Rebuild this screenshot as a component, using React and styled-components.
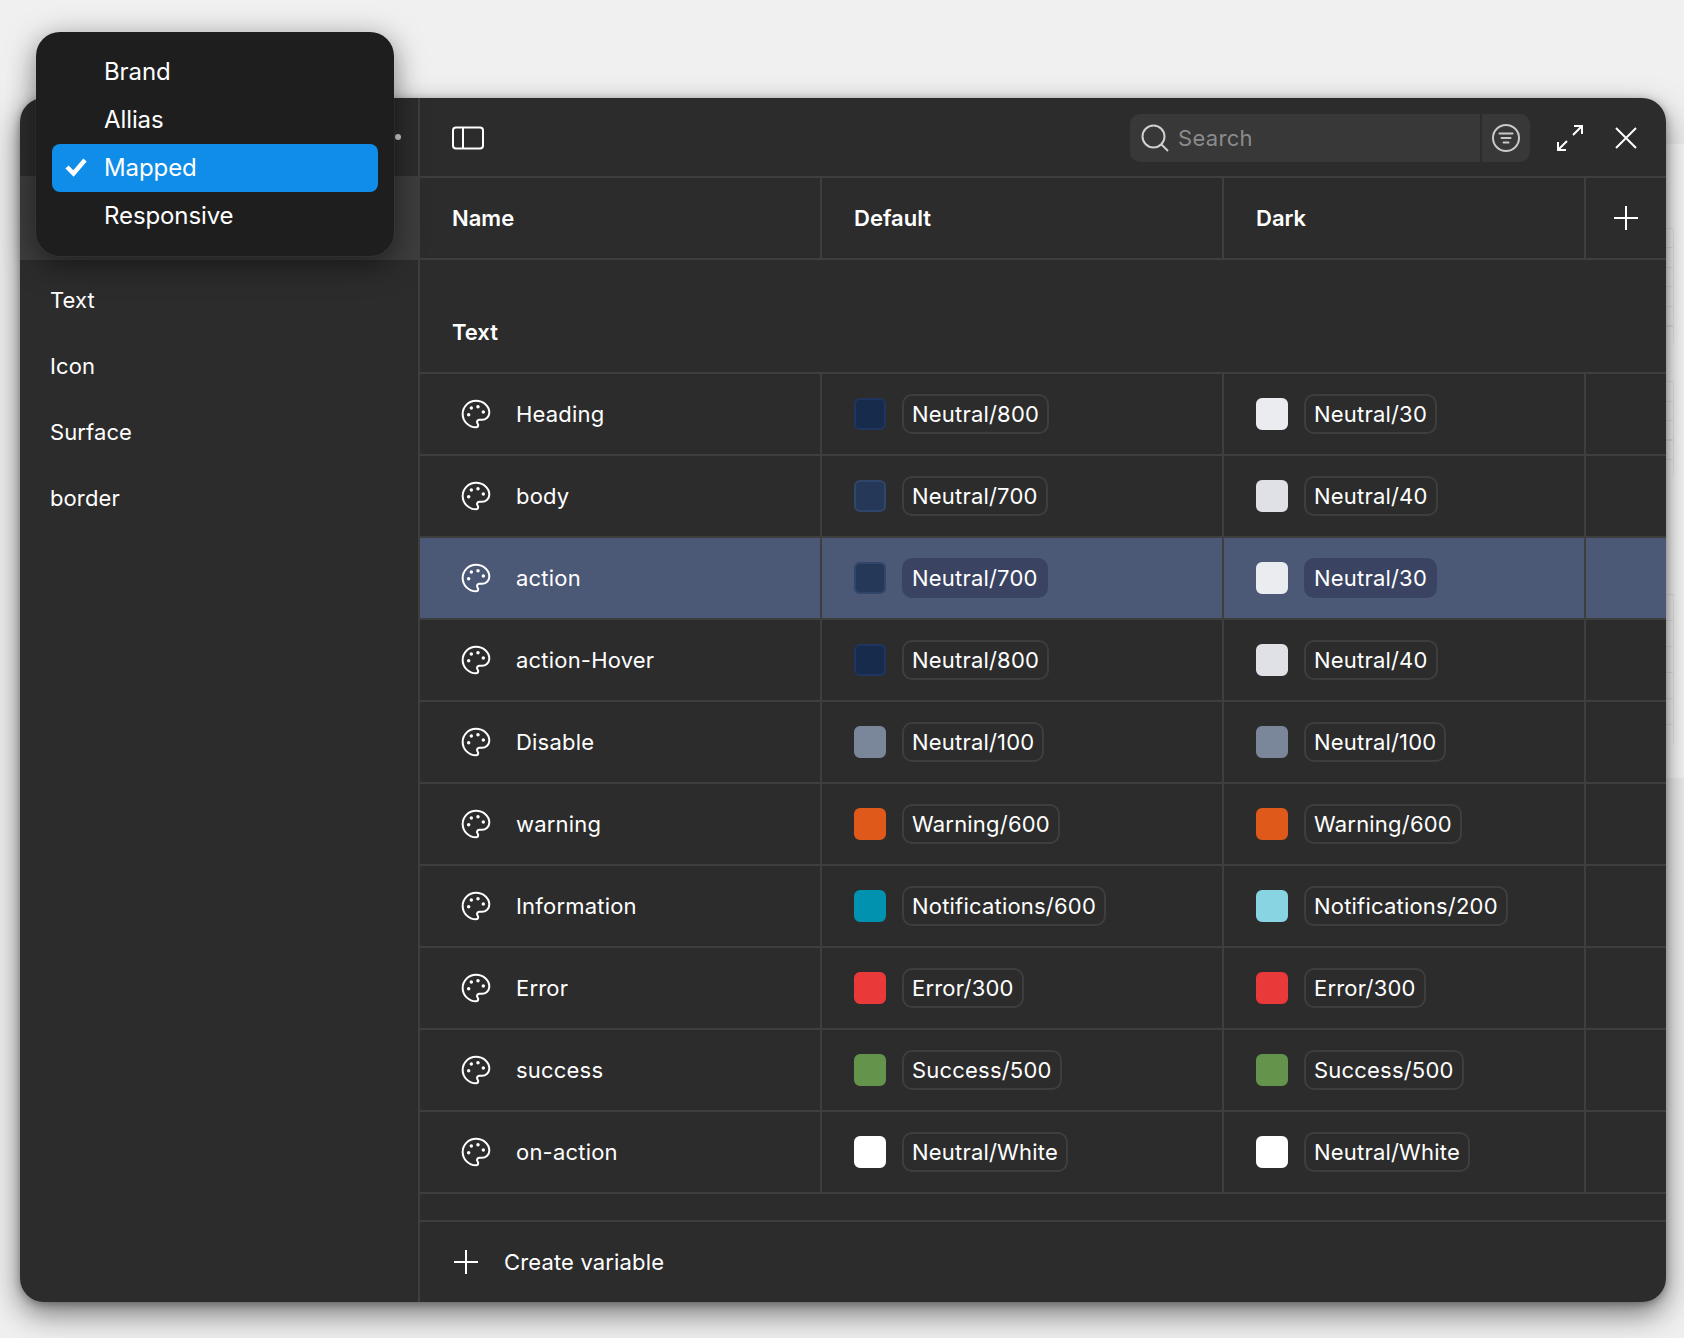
import React from 'react';
import styled, { createGlobalStyle, css } from 'styled-components';

const Global = createGlobalStyle`
  html, body { margin: 0; padding: 0; background: #f0f0f0; }
  body { font-family: Inter, "Liberation Sans", sans-serif; -webkit-font-smoothing: antialiased; }
`;

const Page = styled.div`
  position: relative;
  width: 1684px;
  height: 1338px;
  overflow: hidden;
  padding: 98px 18px 36px 20px;
  box-sizing: border-box;
  background: #f0f0f0;
`;

const Backdrop = styled.div`
  position: absolute;
  right: 0;
  top: 144px;
  width: 40px;
  height: 634px;
  background: #fafafa;
  display: flex;
  flex-direction: column;
  align-items: flex-start;
`;

const PeekGroup = styled.div`
  width: 30px;
  height: ${(p) => p.$h}px;
  margin-top: ${(p) => p.$mt}px;
  box-sizing: border-box;
  border-right: 1px solid #ececec;
  background: repeating-linear-gradient(to bottom, #e9e9e9 0, #e9e9e9 1px, transparent 1px, transparent ${(p) => p.$step}px);
`;

const Window = styled.div`
  position: relative;
  height: 100%;
  display: grid;
  grid-template-columns: 400px 1fr;
  background: #2c2c2c;
  border-radius: 24px;
  overflow: hidden;
  box-shadow: 0 12px 30px rgba(0, 0, 0, 0.5), 0 2px 8px rgba(0, 0, 0, 0.3);
`;

const Sidebar = styled.aside`
  display: flex;
  flex-direction: column;
  border-right: 2px solid #3e3e3e;
  color: #fff;
`;

const SideTop = styled.div`
  height: 80px;
  box-sizing: border-box;
  display: flex;
  align-items: center;
  justify-content: flex-end;
  padding-right: 17px;
  border-bottom: 2px solid #3e3e3e;
`;

const Dot = styled.span`
  width: 6px;
  height: 6px;
  border-radius: 50%;
  background: #cfcfcf;
`;

const SideSelected = styled.div`
  height: 82px;
  box-sizing: border-box;
  background: #3d3d3d;
  border-bottom: 2px solid #3e3e3e;
  flex-shrink: 0;
`;

const SideList = styled.div`
  display: flex;
  flex-direction: column;
  padding-top: 7px;
`;

const SideItem = styled.div`
  height: 66px;
  display: flex;
  align-items: center;
  padding-left: 30px;
  font-size: 22px;
  letter-spacing: 0.1px;
`;

const Main = styled.main`
  display: flex;
  flex-direction: column;
  min-width: 0;
  color: #fff;
`;

const Toolbar = styled.div`
  height: 80px;
  box-sizing: border-box;
  display: flex;
  align-items: center;
  padding: 2px 25px 0 32px;
  border-bottom: 2px solid #3e3e3e;
`;

const ToolSpacer = styled.div`
  flex: 1;
`;

const SearchBox = styled.div`
  width: 400px;
  height: 48px;
  display: flex;
  align-items: stretch;
  background: #383838;
  border-radius: 10px;
  overflow: hidden;
  margin-right: 25px;
`;

const SearchField = styled.div`
  flex: 1;
  display: flex;
  align-items: center;
  gap: 8px;
  padding-left: 10px;
  color: #8b8b8b;
  font-size: 22px;
  letter-spacing: 0.3px;
  border-right: 2px solid #2c2c2c;
`;

const FilterBtn = styled.div`
  width: 48px;
  display: flex;
  align-items: center;
  justify-content: center;
`;

const IconBtn = styled.div`
  width: 30px;
  height: 30px;
  display: flex;
  align-items: center;
  justify-content: center;
  margin-left: ${(p) => p.$ml || 0}px;
`;

const Row = styled.div`
  display: grid;
  grid-template-columns: 402px 402px 362px 1fr;
  height: 82px;
  box-sizing: border-box;
  border-bottom: 2px solid #3e3e3e;
  flex-shrink: 0;
  ${(p) => p.$active && css`background: #4b5876;`}
`;

const Cell = styled.div`
  display: flex;
  align-items: center;
  padding-left: 32px;
  border-right: 2px solid #3e3e3e;
  min-width: 0;
  &:last-child { border-right: 0; padding-left: 0; justify-content: center; }
`;

const HeadText = styled.span`
  font-size: 22px;
  font-weight: 600;
`;

const Section = styled.div`
  height: 114px;
  box-sizing: border-box;
  display: flex;
  align-items: flex-end;
  padding: 0 0 27px 32px;
  border-bottom: 2px solid #3e3e3e;
  flex-shrink: 0;
`;

const Label = styled.span`
  font-size: 22px;
  letter-spacing: 0.2px;
  margin-left: 24px;
`;

const PaletteSvg = styled.svg`
  width: 32px;
  height: 32px;
  margin-left: 8px;
  flex-shrink: 0;
`;

const Swatch = styled.span`
  width: 32px;
  height: 32px;
  box-sizing: border-box;
  border-radius: 6px;
  background: ${(p) => p.$c};
  border: 2px solid ${(p) => p.$b || p.$c};
  flex-shrink: 0;
`;

const Chip = styled.span`
  margin-left: 16px;
  height: 40px;
  box-sizing: border-box;
  display: inline-flex;
  align-items: center;
  padding: 0 8px;
  border-radius: 10px;
  font-size: 22px;
  letter-spacing: 0.2px;
  white-space: nowrap;
  border: 2px solid ${(p) => (p.$active ? '#3a4462' : '#3e3e3e')};
  ${(p) => p.$active && css`background: #3a4462;`}
`;

const Gap = styled.div`
  height: 28px;
  flex-shrink: 0;
  box-sizing: border-box;
  border-bottom: 2px solid #3e3e3e;
`;

const Footer = styled.div`
  flex: 1;
  display: flex;
  align-items: center;
  padding-left: 34px;
  font-size: 22px;
  letter-spacing: 0.15px;
  gap: 26px;
`;

const Menu = styled.div`
  position: absolute;
  left: 36px;
  top: 32px;
  width: 358px;
  height: 224px;
  box-sizing: border-box;
  padding: 16px;
  background: #1e1e1e;
  border-radius: 24px;
  box-shadow: 0 0 0 1px rgba(255,255,255,0.04), 0 8px 30px rgba(0, 0, 0, 0.5);
  display: flex;
  flex-direction: column;
  color: #fff;
  z-index: 5;
`;

const MenuItem = styled.div`
  height: 48px;
  box-sizing: border-box;
  padding-bottom: 2px;
  flex-shrink: 0;
  display: flex;
  align-items: center;
  border-radius: 8px;
  padding-left: 52px;
  position: relative;
  font-size: 24px;
  letter-spacing: -0.1px;
  ${(p) => p.$selected && css`background: #0f8de9;`}
`;

const CheckSvg = styled.svg`
  position: absolute;
  left: 13px;
  top: 13px;
  width: 22px;
  height: 20px;
`;

const PanelIcon = () => (
  <svg width="32" height="24" viewBox="0 0 32 24" fill="none" stroke="#fff" strokeWidth="2">
    <rect x="1" y="1.5" width="30" height="21" rx="3" />
    <line x1="11" y1="1.5" x2="11" y2="22.5" />
  </svg>
);

const SearchIcon = () => (
  <svg width="30" height="30" viewBox="0 0 30 30" fill="none" stroke="#d0d0d0" strokeWidth="2">
    <circle cx="13.5" cy="13.5" r="11" />
    <line x1="21.5" y1="21.5" x2="28" y2="28" />
  </svg>
);

const FilterIcon = () => (
  <svg width="30" height="30" viewBox="0 0 30 30" fill="none" stroke="#c9c9c9" strokeWidth="2" strokeLinecap="round">
    <circle cx="15" cy="15" r="13" />
    <line x1="8.5" y1="10.5" x2="21.5" y2="10.5" />
    <line x1="10.5" y1="15" x2="19.5" y2="15" />
    <line x1="12.5" y1="19.5" x2="17.5" y2="19.5" />
  </svg>
);

const ExpandIcon = () => (
  <svg width="28" height="28" viewBox="0 0 28 28" fill="none" stroke="#fff" strokeWidth="2">
    <path d="M17 11 L26 2 M18 2 H26 V10" />
    <path d="M11 17 L2 26 M2 18 V26 H10" />
  </svg>
);

const CloseIcon = () => (
  <svg width="24" height="24" viewBox="0 0 24 24" fill="none" stroke="#fff" strokeWidth="2">
    <path d="M2 2 L22 22 M22 2 L2 22" />
  </svg>
);

const PlusIcon = () => (
  <svg width="24" height="24" viewBox="0 0 24 24" fill="none" stroke="#fff" strokeWidth="2">
    <path d="M12 0 V24 M0 12 H24" />
  </svg>
);

const PaletteIcon = () => (
  <PaletteSvg viewBox="0 0 24 24" fill="none" stroke="#fff" strokeWidth="1.5" strokeLinecap="round" strokeLinejoin="round">
    <path d="M12 2C6.5 2 2 6.5 2 12s4.5 10 10 10c.926 0 1.648-.746 1.648-1.688 0-.437-.18-.835-.437-1.125-.29-.289-.438-.652-.438-1.125a1.64 1.64 0 0 1 1.668-1.668h1.996c3.051 0 5.555-2.503 5.555-5.554C21.965 6.012 17.461 2 12 2z" />
    <g fill="#fff" stroke="none">
      <circle cx="13.5" cy="6.5" r="1.3" />
      <circle cx="17.5" cy="10.5" r="1.3" />
      <circle cx="8.5" cy="7.5" r="1.3" />
      <circle cx="6.5" cy="12.5" r="1.3" />
    </g>
  </PaletteSvg>
);

const MenuCheck = () => (
  <CheckSvg viewBox="0 0 22 20" fill="none" stroke="#fff" strokeWidth="4.4">
    <path d="M2 10 L8.5 16.5 L20 3" />
  </CheckSvg>
);

const N800 = ['#172b4d', '#1f3560'];
const N700 = ['#253858', '#30456a'];
const N30 = ['#ebecf0'];
const N40 = ['#dfe1e6'];
const N100 = ['#7a869a'];
const WARN = ['#df5a1a'];
const INFO6 = ['#0092ae'];
const INFO2 = ['#88d4e2'];
const ERR = ['#ea3939'];
const SUC = ['#64934c'];
const WHITE = ['#ffffff'];

const rows = [
  ['Heading', N800, 'Neutral/800', N30, 'Neutral/30'],
  ['body', N700, 'Neutral/700', N40, 'Neutral/40'],
  ['action', N700, 'Neutral/700', N30, 'Neutral/30', true],
  ['action-Hover', N800, 'Neutral/800', N40, 'Neutral/40'],
  ['Disable', N100, 'Neutral/100', N100, 'Neutral/100'],
  ['warning', WARN, 'Warning/600', WARN, 'Warning/600'],
  ['Information', INFO6, 'Notifications/600', INFO2, 'Notifications/200'],
  ['Error', ERR, 'Error/300', ERR, 'Error/300'],
  ['success', SUC, 'Success/500', SUC, 'Success/500'],
  ['on-action', WHITE, 'Neutral/White', WHITE, 'Neutral/White'],
];

export default function App() {
  return (
    <Page>
      <Global />
      <Backdrop>
        <PeekGroup $mt={84} $h={115} $step={19.5} />
        <PeekGroup $mt={38} $h={96} $step={19.5} />
        <PeekGroup $mt={117} $h={150} $step={26} />
      </Backdrop>
      <Window>
        <Sidebar>
          <SideTop><Dot /></SideTop>
          <SideSelected />
          <SideList>
            {['Text', 'Icon', 'Surface', 'border'].map((t) => <SideItem key={t}>{t}</SideItem>)}
          </SideList>
        </Sidebar>
        <Main>
          <Toolbar>
            <PanelIcon />
            <ToolSpacer />
            <SearchBox>
              <SearchField><SearchIcon />Search</SearchField>
              <FilterBtn><FilterIcon /></FilterBtn>
            </SearchBox>
            <IconBtn><ExpandIcon /></IconBtn>
            <IconBtn $ml={26}><CloseIcon /></IconBtn>
          </Toolbar>
          <Row>
            <Cell><HeadText>Name</HeadText></Cell>
            <Cell><HeadText>Default</HeadText></Cell>
            <Cell><HeadText>Dark</HeadText></Cell>
            <Cell><PlusIcon /></Cell>
          </Row>
          <Section><HeadText>Text</HeadText></Section>
          {rows.map(([name, c1, t1, c2, t2, active]) => (
            <Row key={name} $active={active}>
              <Cell><PaletteIcon /><Label>{name}</Label></Cell>
              <Cell>
                <Swatch $c={c1[0]} $b={c1[1]} />
                <Chip $active={active}>{t1}</Chip>
              </Cell>
              <Cell>
                <Swatch $c={c2[0]} $b={c2[1]} />
                <Chip $active={active}>{t2}</Chip>
              </Cell>
              <Cell />
            </Row>
          ))}
          <Gap />
          <Footer><PlusIcon />Create variable</Footer>
        </Main>
      </Window>
      <Menu>
        <MenuItem>Brand</MenuItem>
        <MenuItem>Allias</MenuItem>
        <MenuItem $selected><MenuCheck />Mapped</MenuItem>
        <MenuItem>Responsive</MenuItem>
      </Menu>
    </Page>
  );
}
